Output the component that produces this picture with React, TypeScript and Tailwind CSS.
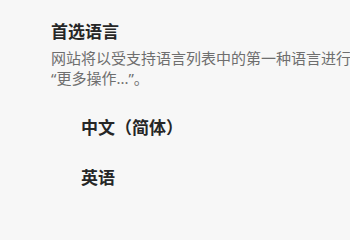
export default function App() {
  return (
    <div
      className="min-h-screen w-full overflow-hidden bg-[#f7f7f7] text-[#1f1f1f]"
      style={{ fontFamily: '"Noto Sans", "Noto Sans CJK SC", sans-serif' }}
    >
      <div className="pl-[51px] pt-[20px]">
        {/* Section header */}
        <h2 className="text-[17px] font-bold leading-[24px] text-[#262626]">首选语言</h2>
        <p className="mt-[4px] whitespace-nowrap text-[15px] leading-[20px] text-[#6e6e6e]">
          网站将以受支持语言列表中的第一种语言进行显示。若要对语言重新排序，请选择
          <br />
          “更多操作...”。
        </p>

        {/* Language list */}
        <div className="mt-[15px] pl-[30px]">
          {['中文（简体）', '英语'].map(lang => (
            <div key={lang} className="flex h-[50px] items-center">
              <span className="text-[17px] font-bold leading-[24px] text-[#262626]">{lang}</span>
            </div>
          ))}
        </div>
      </div>
    </div>
  )
}
